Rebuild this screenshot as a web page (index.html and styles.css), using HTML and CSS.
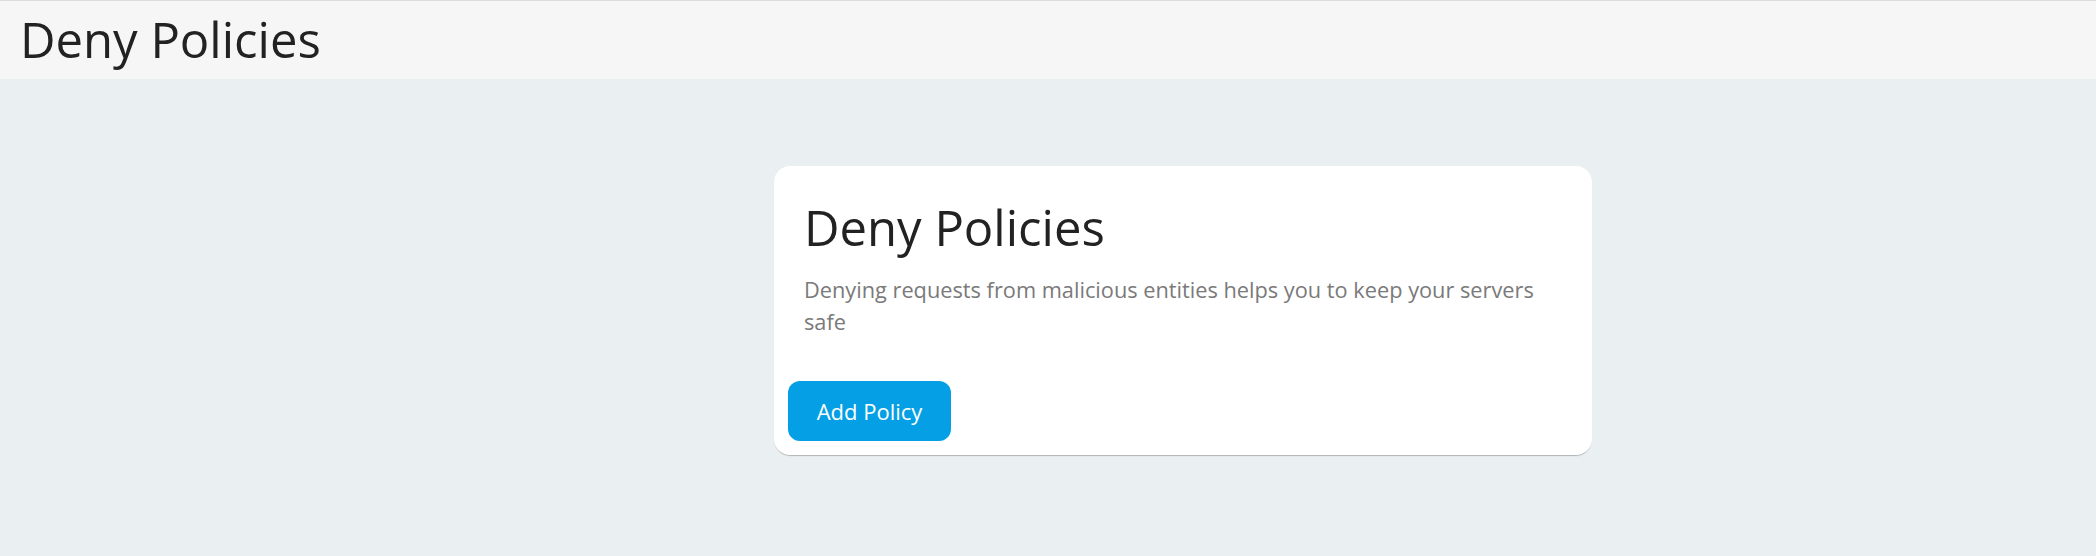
FILE: index.html
```html
<!DOCTYPE html>
<html lang="en">
<head>
<meta charset="utf-8">
<title>Deny Policies</title>
<link rel="stylesheet" href="styles.css">
</head>
<body>
<header class="topbar">
  <h1 class="topbar-title">Deny Policies</h1>
</header>
<main class="content">
  <section class="card">
    <div class="card-body">
      <h2 class="card-title">Deny Policies</h2>
      <p class="card-desc">Denying requests from malicious entities helps you to keep your servers safe</p>
    </div>
    <div class="card-actions">
      <button class="btn-primary" type="button">Add Policy</button>
    </div>
  </section>
</main>
</body>
</html>
```

FILE: styles.css
```css
html, body {
  margin: 0;
  padding: 0;
}
body {
  background: #eaeff2;
  font-family: "Open Sans", "Noto Sans", sans-serif;
  font-weight: 400;
  width: 2096px;
  height: 556px;
  overflow: hidden;
}
.topbar {
  border-top: 1px solid #dcdcdc;
  background: #f6f6f6;
  height: 79px;
  box-sizing: border-box;
  padding: 8px 0 0 20px;
}
.topbar-title {
  margin: 0;
  font-size: 49px;
  line-height: 60px;
  font-weight: 400;
  color: #222222;
}
.content {
  padding: 87px 0 0 774px;
}
.card {
  width: 818px;
  background: #ffffff;
  border-radius: 16px;
  box-shadow: 0 2px 1px -1px rgba(0,0,0,0.2), 0 1px 1px 0 rgba(0,0,0,0.06);
}
.card-body {
  padding: 31px 30px 0 30px;
}
.card-title {
  margin: 0;
  font-size: 49px;
  line-height: 60px;
  font-weight: 400;
  color: #222222;
}
.card-desc {
  margin: 17px 0 0;
  font-size: 21.75px;
  line-height: 32px;
  font-weight: 400;
  color: #7a7a7a;
}
.card-actions {
  padding: 43px 14px 14px;
}
.btn-primary {
  display: block;
  width: 163px;
  height: 60px;
  border: 0;
  border-radius: 12px;
  background: #049fe4;
  color: #ffffff;
  font-family: "Open Sans", "Noto Sans", sans-serif;
  font-size: 22px;
  font-weight: 400;
  padding: 0;
  cursor: pointer;
}
```
